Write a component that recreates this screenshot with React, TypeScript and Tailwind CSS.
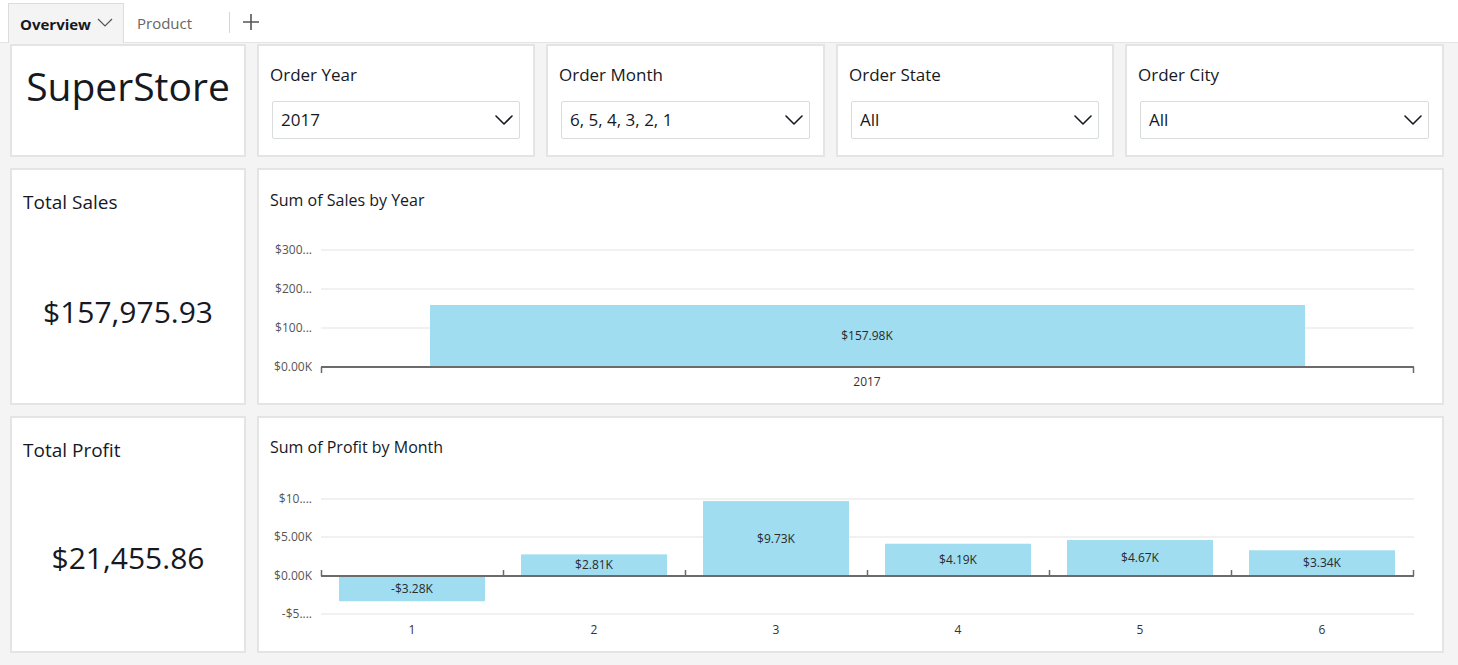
import React from 'react';

const font = { fontFamily: '"Open Sans", "Noto Sans", Arial, sans-serif' };

const BAR = '#a0ddf0';
const GRID = '#ececec';
const AXIS = '#6b6b6b';

function Chevron({ className = '' }: { className?: string }) {
  return (
    <svg className={className} width="18" height="10" viewBox="0 0 18 10" fill="none">
      <path d="M1 1l8 8 8-8" stroke="#16191f" strokeWidth="1.6" strokeLinecap="round" strokeLinejoin="round" />
    </svg>
  );
}

function Panel({ children, className = '' }: { children: React.ReactNode; className?: string }) {
  return <div className={`bg-white border-2 border-[#e4e4e4] ${className}`}>{children}</div>;
}

function Filter({ label, value }: { label: string; value: string }) {
  return (
    <Panel className="flex flex-col">
      <div className="pl-[11px] pt-[16px] text-[17px] leading-[26px] text-[#16191f]">{label}</div>
      <div className="mx-[13px] mt-[13px] h-[38px] border border-[#d9dcdc] rounded-[2px] flex items-center justify-between pl-[8px] pr-[6px]">
        <span className="text-[17px] text-[#16191f]">{value}</span>
        <Chevron />
      </div>
    </Panel>
  );
}

function Kpi({ label, value, gapClass }: { label: string; value: string; gapClass: string }) {
  return (
    <Panel className="flex flex-col">
      <div className="pl-[11px] pt-[19px] text-[19px] leading-[26px] text-[#16191f]">{label}</div>
      <div className={`${gapClass} text-center text-[30px] leading-[36px] text-[#16191f]`}>{value}</div>
    </Panel>
  );
}

const W = 1183;

function SalesChart() {
  const grids = [
    { y: 38, t: '$300...' },
    { y: 77, t: '$200...' },
    { y: 116, t: '$100...' },
  ];
  return (
    <svg width={W} height={190} className="block">
      {grids.map((g) => (
        <g key={g.t}>
          <line x1={62} x2={1155} y1={g.y} y2={g.y} stroke={GRID} strokeWidth={1.5} />
          <text x={53} y={g.y + 4} textAnchor="end" fontSize={12} fill="#555">{g.t}</text>
        </g>
      ))}
      <text x={53} y={159} textAnchor="end" fontSize={12} fill="#555">$0.00K</text>
      <rect x={171} y={93} width={875} height={62} fill={BAR} />
      <text x={608} y={128} textAnchor="middle" fontSize={12} fill="#2a2a2a">$157.98K</text>
      <line x1={62} x2={1155} y1={155} y2={155} stroke={AXIS} strokeWidth={2} />
      <line x1={62.5} x2={62.5} y1={155} y2={161} stroke={AXIS} strokeWidth={1.5} />
      <line x1={1154.5} x2={1154.5} y1={155} y2={161} stroke={AXIS} strokeWidth={1.5} />
      <text x={608} y={174} textAnchor="middle" fontSize={12} fill="#333">2017</text>
    </svg>
  );
}

const months = [
  { m: '1', v: -3.28, t: '-$3.28K' },
  { m: '2', v: 2.81, t: '$2.81K' },
  { m: '3', v: 9.73, t: '$9.73K' },
  { m: '4', v: 4.19, t: '$4.19K' },
  { m: '5', v: 4.67, t: '$4.67K' },
  { m: '6', v: 3.34, t: '$3.34K' },
];

function ProfitChart() {
  const zero = 117;
  const k = 7.7;
  const grids = [
    { y: 40, t: '$10....' },
    { y: 78, t: '$5.00K' },
    { y: 155, t: '-$5....' },
  ];
  return (
    <svg width={W} height={190} className="block">
      {grids.map((g) => (
        <g key={g.t}>
          <line x1={62} x2={1155} y1={g.y} y2={g.y} stroke={GRID} strokeWidth={1.5} />
          <text x={53} y={g.y + 4} textAnchor="end" fontSize={12} fill="#555">{g.t}</text>
        </g>
      ))}
      <text x={53} y={121} textAnchor="end" fontSize={12} fill="#555">$0.00K</text>
      {months.map((d, i) => {
        const x0 = 62 + i * 182;
        const h = Math.abs(d.v) * k;
        const y = d.v >= 0 ? zero - h : zero;
        return (
          <g key={d.m}>
            <rect x={x0 + 18} y={y} width={146} height={h} fill={BAR} />
            <text x={x0 + 91} y={y + h / 2 + 4} textAnchor="middle" fontSize={12} fill="#2a2a2a">{d.t}</text>
            <text x={x0 + 91} y={175} textAnchor="middle" fontSize={12} fill="#333">{d.m}</text>
          </g>
        );
      })}
      <line x1={62} x2={1155} y1={zero} y2={zero} stroke={AXIS} strokeWidth={2} />
      {[0, 1, 2, 3, 4, 5, 6].map((i) => (
        <line key={i} x1={62.5 + i * 182} x2={62.5 + i * 182} y1={zero} y2={zero - 6} stroke={AXIS} strokeWidth={1.5} />
      ))}
    </svg>
  );
}

export default function App() {
  return (
    <div style={font} className="w-full h-[665px] bg-[#f4f4f4] overflow-hidden">
      <div className="h-[43px] bg-white border-b border-[#e4e4e4] flex items-end pl-[8px]">
        <div className="h-[40px] w-[116px] bg-[#f4f4f4] border border-b-0 border-[#dcdcdc] flex items-center pl-[11px] pt-[2px] gap-[6px] -mb-px">
          <span className="text-[15px] font-bold text-[#16191f]">Overview</span>
          <svg width="16" height="9" viewBox="0 0 16 9" fill="none" className="mb-[4px]">
            <path d="M1 1l7 7 7-7" stroke="#555" strokeWidth="1.2" />
          </svg>
        </div>
        <div className="h-[40px] w-[105px] flex items-center pl-[13px] pt-[3px] text-[15px] text-[#666]">Product</div>
        <div className="h-[40px] flex items-center">
          <div className="w-px h-[21px] bg-[#d6d6d6]" />
          <svg width="18" height="18" viewBox="0 0 18 18" className="ml-[12px]">
            <path d="M9 1v16M1 9h16" stroke="#555" strokeWidth="1.6" />
          </svg>
        </div>
      </div>

      <div className="pl-[10px] pt-px grid grid-cols-[236px_278px_279px_278px_319px] grid-rows-[113px_237px_237px] gap-x-[11px] gap-y-[11px]">
        <Panel className="flex justify-center">
          <div className="pt-[15px] text-[39px] leading-[50px] text-[#16191f]">SuperStore</div>
        </Panel>
        <Filter label="Order Year" value="2017" />
        <Filter label="Order Month" value="6, 5, 4, 3, 2, 1" />
        <Filter label="Order State" value="All" />
        <Filter label="Order City" value="All" />

        <Kpi label="Total Sales" value="$157,975.93" gapClass="mt-[79px]" />
        <Panel className="col-span-4 flex flex-col">
          <div className="pl-[11px] pt-[18px] h-[42px] text-[16px] leading-[24px] text-[#16191f]">Sum of Sales by Year</div>
          <SalesChart />
        </Panel>

        <Kpi label="Total Profit" value="$21,455.86" gapClass="mt-[77px]" />
        <Panel className="col-span-4 flex flex-col">
          <div className="pl-[11px] pt-[17px] h-[41px] text-[16px] leading-[24px] text-[#16191f]">Sum of Profit by Month</div>
          <ProfitChart />
        </Panel>
      </div>
    </div>
  );
}
